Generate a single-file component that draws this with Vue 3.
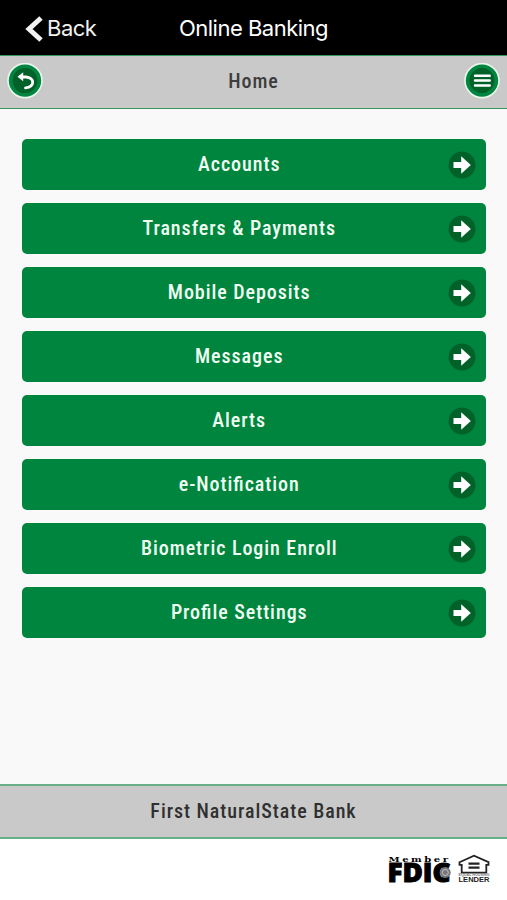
<template>
    <div class="app">
        <header class="nav-bar">
            <button type="button" class="nav-back">
                <svg class="nav-chevron" viewBox="0 0 18 28">
                    <path d="M16 3 L4 14 L16 25" />
                </svg>
                <span>Back</span>
            </button>
            <span class="nav-title">Online Banking</span>
        </header>

        <div class="title-bar">
            <button type="button" class="round-btn" aria-label="Return">
                <svg viewBox="0 0 36 36">
                    <circle class="ring" cx="18" cy="17.6" r="17" />
                    <circle class="core" cx="18" cy="17.6" r="12.5" />
                    <path class="fill" d="M10.5 13.8 L16.2 9.2 V18.2 Z" />
                    <path class="line" d="M14 14 H19 C28 14.6 28 24 18.5 24.8" />
                </svg>
            </button>
            <h1 class="label">Home</h1>
            <button type="button" class="round-btn" aria-label="Menu">
                <svg viewBox="0 0 36 36">
                    <circle class="ring" cx="18" cy="17.6" r="17" />
                    <circle class="core" cx="18" cy="17.6" r="12.5" />
                    <path class="line bars" d="M11 12.7 H25.7 M11 17.6 H25.7 M11 22.5 H25.7" />
                </svg>
            </button>
        </div>

        <main class="menu">
            <button v-for="item in items" :key="item" type="button" class="menu-item">
                <span class="label">{{ item }}</span>
                <svg class="arrow" viewBox="0 0 28 28">
                    <circle cx="14" cy="14" r="13.5" />
                    <path d="M5.5 11 H13.2 V5.3 L22.8 14 L13.2 22.7 V17 H5.5 Z" />
                </svg>
            </button>
        </main>

        <div class="bank-bar">
            <span class="label">First NaturalState Bank</span>
        </div>

        <footer class="badges">
            <svg class="fdic" viewBox="0 0 64 30">
                <text class="member" x="0.5" y="7.8" textLength="62" lengthAdjust="spacingAndGlyphs">Member</text>
                <text class="fdic-name" x="-0.5" y="28.4" textLength="63" lengthAdjust="spacingAndGlyphs">FDIC</text>
                <circle class="seal" cx="57.3" cy="18.5" r="5.4" />
                <circle class="seal-ring" cx="57.3" cy="18.5" r="3" />
            </svg>
            <svg class="lender" viewBox="0 0 32 30">
                <path class="roof" d="M1.5 8.2 L16 1.8 L30.5 8.2 V10.9 H28.3 V18.6 H3.7 V10.9 H1.5 Z" />
                <path class="equal" d="M10.5 9.6 H21.5 M10.5 13.6 H21.5" />
                <text class="equal-text" x="0.5" y="22" textLength="31" lengthAdjust="spacingAndGlyphs">EQUAL HOUSING</text>
                <text class="lender-text" x="0.5" y="28.2" textLength="31" lengthAdjust="spacingAndGlyphs">LENDER</text>
            </svg>
        </footer>
    </div>
</template>

<script setup>
import { ref } from 'vue'

const items = ref([
    'Accounts',
    'Transfers & Payments',
    'Mobile Deposits',
    'Messages',
    'Alerts',
    'e-Notification',
    'Biometric Login Enroll',
    'Profile Settings'
])
</script>

<style>
body {
    margin: 0;
    background: #fff;
}
</style>

<style scoped>
.app {
    display: flex;
    flex-direction: column;
    height: 900px;
    overflow: hidden;
    background: #fff;
}

button {
    padding: 0;
    border: none;
    background: none;
    cursor: pointer;
}

.label {
    margin: 0;
    font-family: "Roboto Condensed", Roboto, sans-serif;
    font-stretch: 75%;
    font-size: 20px;
    font-weight: 500;
    line-height: 24px;
    letter-spacing: 0.95px;
    /* keeps the fi ligature, which letter-spacing turns off */
    font-feature-settings: "liga" 1;
    white-space: nowrap;
}

.nav-bar {
    display: grid;
    grid-template-columns: 1fr auto 1fr;
    align-items: center;
    height: 55px;
    box-sizing: border-box;
    background: #000;
    color: #fff;
    font-family: Inter, sans-serif;
    font-size: 22px;
    letter-spacing: -0.5px;
}

.nav-back {
    display: flex;
    align-items: center;
    padding-left: 25px;
    color: #f2f2f2;
    font: inherit;
    letter-spacing: inherit;
}

.nav-chevron {
    width: 18px;
    height: 28px;
    margin: 2px 4px 0 0;
}

.nav-chevron path {
    fill: none;
    stroke: #f2f2f2;
    stroke-width: 5;
}

.title-bar {
    display: flex;
    align-items: center;
    justify-content: space-between;
    height: 54px;
    box-sizing: border-box;
    padding: 0 7px 2px;
    border-top: 1px solid #35955c;
    border-bottom: 1px solid #35955c;
    background: #c9c9c9;
    color: #3d3d3d;
}

.round-btn,
.round-btn svg {
    display: block;
    width: 36px;
    height: 36px;
}

.ring {
    fill: #008641;
    stroke: #e9f6e9;
    stroke-width: 1.6;
}

.core {
    fill: #006229;
}

.fill {
    fill: #fff;
}

.line {
    fill: none;
    stroke: #fff;
    stroke-width: 2.8;
    stroke-linecap: round;
}

.bars {
    stroke-width: 2.5;
}

.menu {
    display: flex;
    flex: 1;
    flex-direction: column;
    gap: 12.6px;
    padding: 30px 21px 0 22px;
    background: #f9f9f9;
}

.menu-item {
    display: flex;
    align-items: center;
    height: 51.4px;
    padding-right: 10.5px;
    border-radius: 5px;
    background: #00853f;
    color: #f1fff2;
}

.menu-item .label {
    flex: 1;
    padding: 0 0 1px 9px;
}

.arrow {
    width: 28px;
    height: 28px;
}

.arrow circle {
    fill: #006229;
}

.arrow path {
    fill: #fff;
}

.bank-bar {
    display: flex;
    align-items: center;
    justify-content: center;
    height: 55px;
    box-sizing: border-box;
    padding-bottom: 1px;
    border-top: 2px solid #68ae86;
    border-bottom: 2px solid #68ae86;
    background: #c9c9c9;
    color: #303030;
}

.badges {
    display: flex;
    align-items: flex-start;
    justify-content: flex-end;
    gap: 6px;
    height: 61px;
    box-sizing: border-box;
    padding: 15px 17px 0 0;
}

.fdic {
    width: 64px;
    height: 30px;
    overflow: visible;
}

.member {
    font: bold 8px "DejaVu Serif", serif;
    letter-spacing: 2px;
}

.fdic-name {
    font: 800 26px "Open Sans", sans-serif;
    stroke: #000;
    stroke-width: 1;
}

.seal {
    fill: #777;
}

.seal-ring {
    fill: none;
    stroke: #c4c4c4;
    stroke-width: 1;
}

.lender {
    width: 32px;
    height: 30px;
}

.roof {
    fill: none;
    stroke: #222;
    stroke-width: 1.8;
}

.equal {
    stroke: #222;
    stroke-width: 2.4;
}

.equal-text {
    fill: #777;
    font: bold 3px "Liberation Sans", sans-serif;
}

.lender-text {
    fill: #222;
    font: bold 7.5px "Liberation Sans", sans-serif;
}
</style>
